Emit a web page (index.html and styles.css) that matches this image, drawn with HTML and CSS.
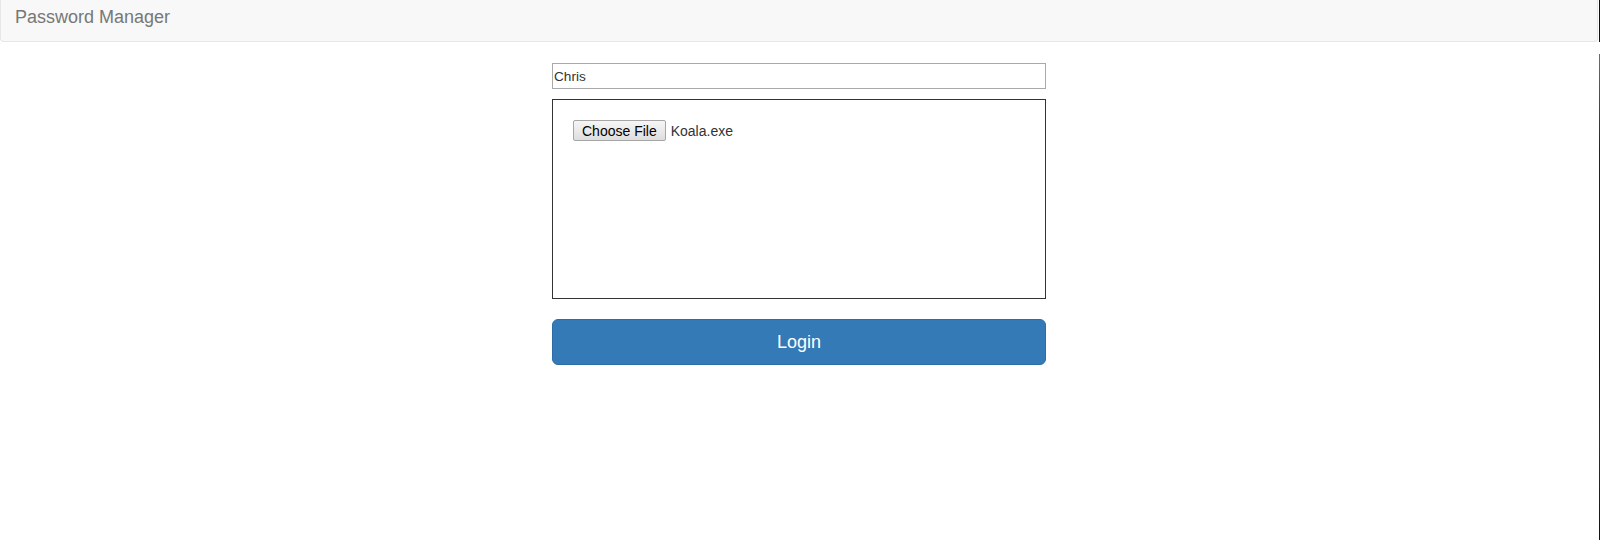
FILE: index.html
```html
<!DOCTYPE html>
<html>
<head>
<meta charset="utf-8">
<title>Password Manager</title>
<link rel="stylesheet" href="styles.css">
</head>
<body>
<div class="page">
  <div class="main">
    <nav class="navbar"><span class="brand">Password Manager</span></nav>
    <form class="login">
      <input class="username" type="text" value="Chris">
      <div class="dropbox">
        <div class="file">
          <span class="file-btn">Choose File</span>
          <span class="file-name">Koala.exe</span>
        </div>
      </div>
      <button class="btn-login" type="button">Login</button>
    </form>
  </div>
  <div class="edge"><div class="edge-top"></div><div class="edge-gap"></div><div class="edge-rest"></div></div>
</div>
</body>
</html>
```
FILE: styles.css
```css
html, body { margin: 0; padding: 0; background: #fff; }
body { font-family: "Liberation Sans", Arial, sans-serif; color: #333; }
.page { display: flex; height: 540px; }
.main { flex: 1; }
.navbar {
  box-sizing: border-box;
  height: 42px;
  background: #f8f8f8;
  border: 1px solid #e7e7e7;
  border-top: 0;
  border-radius: 0 0 4px 4px;
  padding: 7px 0 0 14px;
}
.brand { display: block; font-size: 18px; color: #777; line-height: 20px; }
.login {
  width: 494px;
  margin: 21px auto 0;
  display: flex;
  flex-direction: column;
}
.username {
  box-sizing: border-box;
  height: 26px;
  width: 100%;
  margin: 0;
  border: 1px solid #a9a9a9;
  padding: 1px 1px;
  font-family: "Liberation Sans", Arial, sans-serif;
  font-size: 13.6px;
  color: #333;
  outline: none;
}
.dropbox {
  box-sizing: border-box;
  margin-top: 10px;
  height: 200px;
  border: 1px solid #333;
  padding: 20px 20px;
}
.file { display: flex; align-items: center; gap: 5px; font-size: 14px; }
.file-btn {
  box-sizing: border-box;
  height: 21px;
  padding: 0 8px;
  display: flex;
  align-items: center;
  border: 1px solid #a6a6a6;
  border-radius: 2px;
  background: linear-gradient(#f6f6f6, #dedede);
  color: #000;
}
.file-name { color: #333; }
.btn-login {
  margin-top: 20px;
  height: 46px;
  width: 100%;
  background: #337ab7;
  border: 1px solid #2e6da4;
  border-radius: 6px;
  color: #fff;
  font-family: "Liberation Sans", Arial, sans-serif;
  font-size: 18px;
  padding: 0;
}
.edge { width: 2px; display: flex; flex-direction: column; }
.edge-top, .edge-gap, .edge-rest { margin-left: 1px; }
.edge-top { height: 42px; background: #111; }
.edge-gap { height: 12px; background: #fff; }
.edge-rest { flex: 1; background: linear-gradient(#8a6a40, #2a2018 20%, #111 60%, #3a2c1c 80%, #111); }
```
